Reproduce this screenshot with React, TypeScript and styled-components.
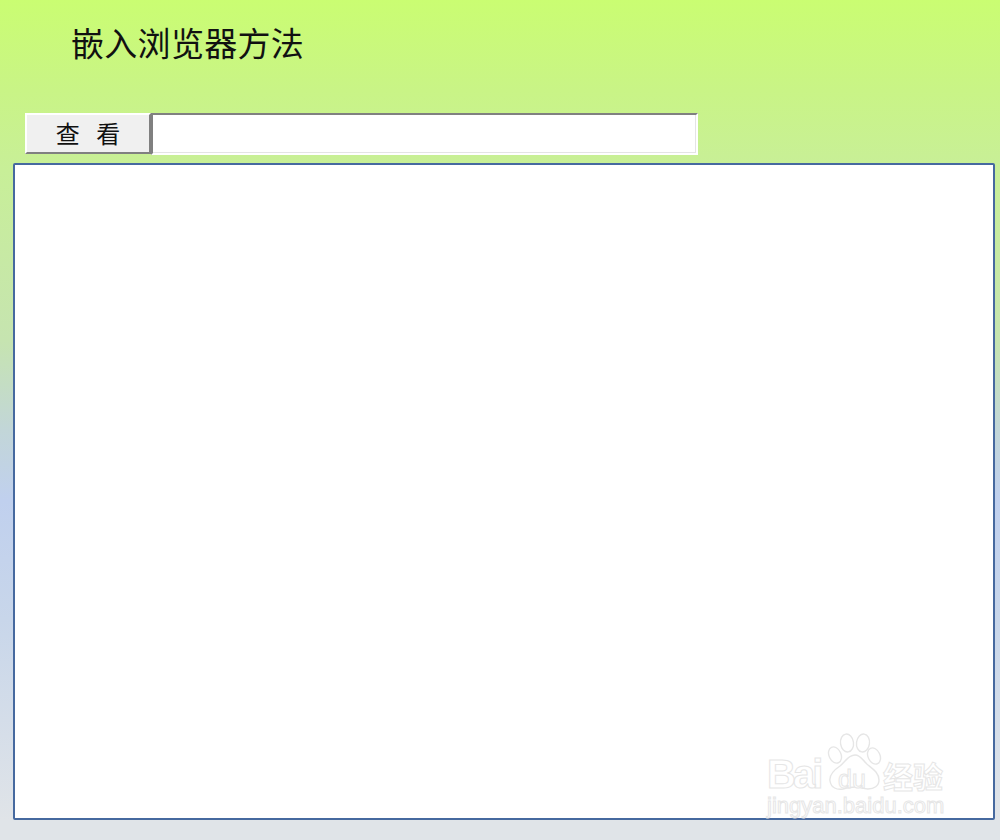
import React from "react";
import styled, { createGlobalStyle } from "styled-components";

const GlobalStyle = createGlobalStyle`
  html, body {
    margin: 0;
    padding: 0;
  }
  body {
    font-family: "Liberation Serif", "Noto Sans CJK SC", serif;
  }
`;

const Page = styled.div`
  width: 1000px;
  height: 840px;
  box-sizing: border-box;
  overflow: hidden;
  padding-top: 20px;
  background: linear-gradient(
    180deg,
    #cafd72 0px,
    #c9f486 90px,
    #c8ef98 170px,
    #c6e4b0 340px,
    #c2d6d8 430px,
    #c0d0ee 500px,
    #c8d6ea 620px,
    #e0e4e8 820px
  );
`;

const Title = styled.h1`
  margin: 0 0 0 71px;
  height: 93px;
  font-family: "Noto Sans CJK SC", sans-serif;
  font-size: 33px;
  line-height: 44px;
  font-weight: 400;
  letter-spacing: 0.3px;
  color: #111;
`;

const Toolbar = styled.div`
  display: flex;
  align-items: flex-start;
  margin-left: 25px;
  height: 50px;
`;

const ViewButton = styled.button`
  width: 126px;
  height: 41px;
  padding: 0 0 3px;
  box-sizing: border-box;
  border: 2px solid;
  border-color: #fff #808080 #808080 #fff;
  background: #f0f0f0;
  font-family: "Noto Sans CJK SC", sans-serif;
  font-size: 24px;
  line-height: 36px;
  word-spacing: 11px;
  color: #111;
`;

const UrlInput = styled.input`
  width: 547px;
  height: 42px;
  box-sizing: border-box;
  margin: 0;
  padding: 0 4px;
  background: #fff;
  outline: none;
  border: 2px solid;
  border-color: #808080 #fff #fff #808080;
  box-shadow: inset -1px -1px 0 #e4e4e4;
`;

const BrowserPanel = styled.div`
  position: relative;
  width: 982px;
  height: 657px;
  margin-left: 13px;
  box-sizing: border-box;
  background: #fff;
  border: 2px solid #46699f;
  border-radius: 2px;
`;

const Watermark = styled.div`
  position: absolute;
  left: 753px;
  top: 567px;
  width: 190px;
  height: 86px;
  color: #fff;
  font-family: "Liberation Sans", sans-serif;
`;

const Paw = styled.svg`
  position: absolute;
  left: 0;
  top: 0;
`;

const BrandRow = styled.div`
  position: absolute;
  left: -1px;
  top: 22px;
  display: flex;
  align-items: baseline;
`;

const Outlined = styled.span<{ $size: number }>`
  font-size: ${(p) => p.$size}px;
  line-height: 1;
  font-weight: 700;
  color: #fff;
  -webkit-text-stroke: 1px #e6e6e6;
`;

const BrandLatin = styled(Outlined)`
  width: 71px;
  letter-spacing: -3px;
`;

const BrandDu = styled(Outlined)`
  width: 45px;
  font-weight: 400;
`;

const BrandCjk = styled(Outlined)`
  font-family: "Noto Sans CJK SC", sans-serif;
`;

const SiteLine = styled(Outlined)`
  position: absolute;
  left: -1px;
  top: 63px;
  font-weight: 400;
  white-space: nowrap;
`;

function BaiduPaw() {
  return (
    <Paw width="190" height="60" viewBox="0 0 190 60" fill="#fff" stroke="#e6e6e6" strokeWidth="1.4">
      <ellipse cx="79" cy="11" rx="6.5" ry="9" transform="rotate(-8 79 11)" />
      <ellipse cx="95" cy="11" rx="6.5" ry="9" transform="rotate(8 95 11)" />
      <ellipse cx="67" cy="23" rx="6" ry="8.5" transform="rotate(-25 67 23)" />
      <ellipse cx="106" cy="24" rx="6" ry="8.5" transform="rotate(-25 106 24)" />
      <path d="M87 23c-7 0-10 7-15 11-6 4-11 9-10 15 1 7 7 9 13 8 4-1 8-2 12-2s8 2 13 2c6 0 11-3 11-9 0-7-6-11-11-15-5-4-7-10-13-10z" />
    </Paw>
  );
}

export default function App() {
  return (
    <Page>
      <GlobalStyle />
      <Title>嵌入浏览器方法</Title>
      <Toolbar>
        <ViewButton type="button">查 看</ViewButton>
        <UrlInput type="text" />
      </Toolbar>
      <BrowserPanel>
        <Watermark>
          <BaiduPaw />
          <BrandRow>
            <BrandLatin $size={40}>Bai</BrandLatin>
            <BrandDu $size={25}>du</BrandDu>
            <BrandCjk $size={30}>经验</BrandCjk>
          </BrandRow>
          <SiteLine $size={22}>jingyan.baidu.com</SiteLine>
        </Watermark>
      </BrowserPanel>
    </Page>
  );
}
